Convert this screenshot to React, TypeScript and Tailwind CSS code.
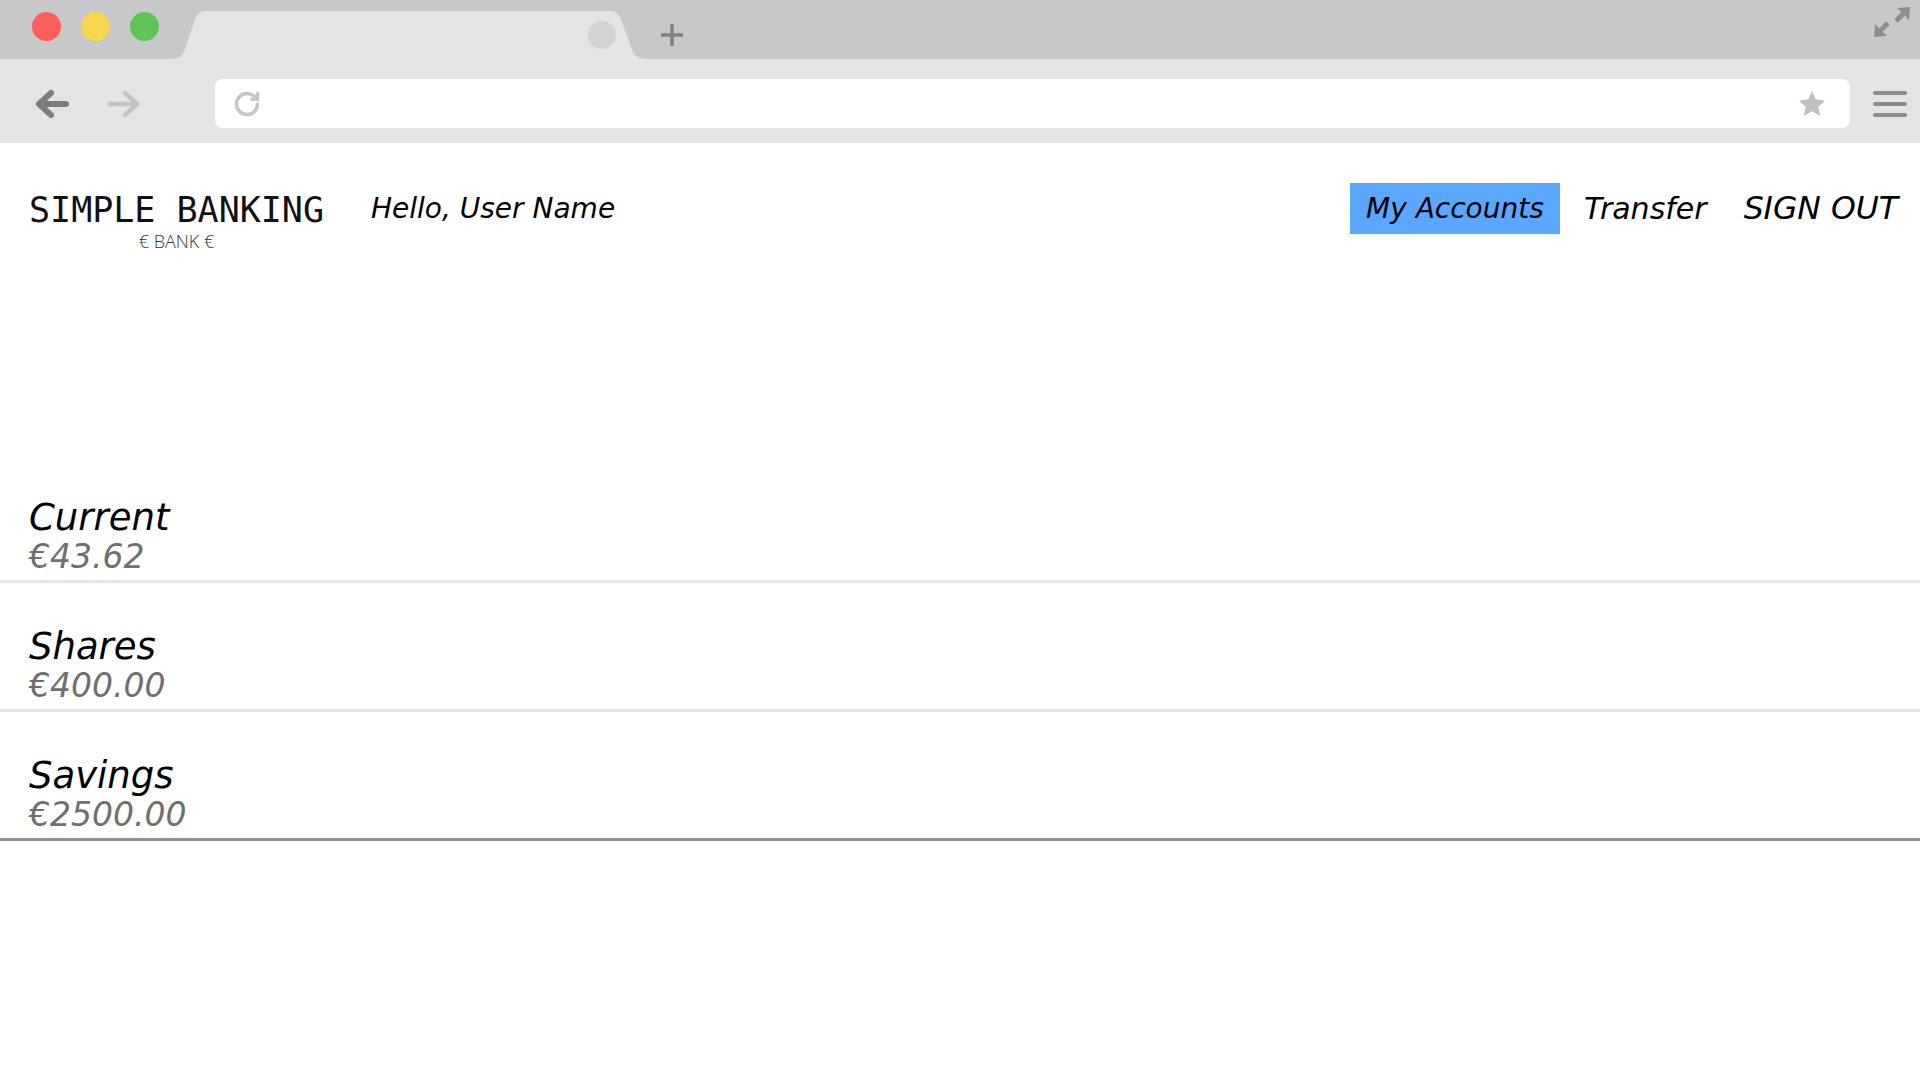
import { RotateCw } from 'lucide-react'

const accounts = [
  { name: 'Current', amount: '€43.62' },
  { name: 'Shares', amount: '€400.00' },
  { name: 'Savings', amount: '€2500.00' },
]

function BrowserChrome() {
  return (
    <div className="w-full">
      {/* tab strip */}
      <div className="flex h-[59px] items-start bg-[#c8c8ca]">
        <div className="flex gap-[20px] pl-[32px] pt-[12px]">
          <span className="h-[29px] w-[29px] rounded-full bg-[#fb5f5b]" />
          <span className="h-[29px] w-[29px] rounded-full bg-[#f8d74c]" />
          <span className="h-[29px] w-[29px] rounded-full bg-[#5fc356]" />
        </div>
        <div className="relative ml-[11px] mt-[11px] flex h-[48px] w-[477px] items-center justify-end pr-[31px]">
          <svg className="absolute inset-0" width="477" height="48" viewBox="0 0 477 48">
            <path
              d="M0 48 C10 48 13 44 15 38 L26 6 C28 2 31 0 36 0 L440 0 C445 0 448 2 450 6 L462 38 C464 44 467 48 477 48 Z"
              fill="#e4e4e4"
            />
          </svg>
          <span className="relative h-[28px] w-[28px] rounded-full bg-[#d3d3d3]" />
        </div>
        <svg className="ml-[13px] mt-[23px]" width="24" height="24" viewBox="0 0 24 24">
          <path d="M12 1 V23 M1 12 H23" stroke="#808080" strokeWidth="3.5" />
        </svg>
        <svg className="ml-auto mr-[8px] mt-[5px]" width="40" height="34" viewBox="0 0 40 34">
          <path d="M38 2 L25 3 L37 15 Z" fill="#8e8e8e" />
          <path d="M33 7 L24 16" stroke="#8e8e8e" strokeWidth="5" />
          <path d="M2 32 L3 19 L15 31 Z" fill="#8e8e8e" />
          <path d="M7 27 L16 18" stroke="#8e8e8e" strokeWidth="5" />
        </svg>
      </div>
      {/* toolbar */}
      <div className="flex h-[84px] items-center bg-[#e4e4e4] pt-[5px]">
        <svg className="ml-[33px]" width="36" height="30" viewBox="0 0 36 30">
          <path d="M33 15 H7 M18 4 L6 15 L18 26" fill="none" stroke="#7d7d7d" strokeWidth="6" strokeLinecap="round" strokeLinejoin="round" />
        </svg>
        <svg className="ml-[38px]" width="36" height="30" viewBox="0 0 36 30">
          <path d="M3 15 H29 M18 4 L30 15 L18 26" fill="none" stroke="#c4c4c4" strokeWidth="4.5" strokeLinecap="round" strokeLinejoin="round" />
        </svg>
        <div className="ml-[72px] flex h-[49px] w-[1635px] items-center rounded-[8px] bg-white pl-[18px] pr-[23px]">
          <RotateCw size={28} strokeWidth={3} color="#c6c6c6" />
          <svg className="ml-auto" width="30" height="30" viewBox="0 0 24 24">
            <path d="M12 1.5 L15.1 8.3 L22.5 9.1 L17 14.1 L18.5 21.5 L12 17.7 L5.5 21.5 L7 14.1 L1.5 9.1 L8.9 8.3 Z" fill="#c0c0c0" />
          </svg>
        </div>
        <div className="ml-[23px] flex w-[34px] flex-col gap-[7px]">
          <span className="h-[4px] rounded-full bg-[#8c8c8c]" />
          <span className="h-[4px] rounded-full bg-[#8c8c8c]" />
          <span className="h-[4px] rounded-full bg-[#8c8c8c]" />
        </div>
      </div>
    </div>
  )
}

export default function App() {
  return (
    <div className="min-h-screen w-full bg-white">
      <BrowserChrome />
      <header className="flex h-[311px] items-start pl-[29px] pr-[22px] pt-[40px]">
        <div className="flex flex-col items-center">
          <span className="mt-[10px] font-['DejaVu_Sans_Mono',monospace] text-[35px] leading-none text-[#111]">
            SIMPLE BANKING
          </span>
          <span className="mt-[2px] font-['Open_Sans',sans-serif] text-[18px] font-light leading-[22px] text-[#333]">
            € BANK €
          </span>
        </div>
        <div className="ml-[47px] flex h-[51px] items-center font-['DejaVu_Sans',sans-serif] text-[28px] italic text-black">
          Hello, User Name
        </div>
        <nav className="ml-auto flex h-[51px] items-center font-['DejaVu_Sans',sans-serif] italic text-black">
          <a className="flex h-[51px] w-[210px] items-center justify-center bg-[#5ba6ff] text-[28px]">My Accounts</a>
          <a className="ml-[24px] flex h-[51px] items-center text-[30px]">Transfer</a>
          <a className="ml-[37px] flex h-[51px] items-center text-[31.5px]">SIGN OUT</a>
        </nav>
      </header>
      <main className="flex flex-col">
        {accounts.map((a, i) => (
          <div
            key={a.name}
            className={
              i === accounts.length - 1
                ? 'border-b-[3px] border-[#8e8e93] px-[29px] pb-[4px] pt-[44px]'
                : 'border-b-[3px] border-[#e6e6e6] px-[29px] pb-[4px] pt-[44px]'
            }
          >
            <div className="font-['DejaVu_Sans',sans-serif] text-[37px] italic leading-[39px] text-black">{a.name}</div>
            <div className="font-['DejaVu_Sans',sans-serif] text-[33px] italic leading-[39px] text-[#6f6f6f]">{a.amount}</div>
          </div>
        ))}
      </main>
    </div>
  )
}
